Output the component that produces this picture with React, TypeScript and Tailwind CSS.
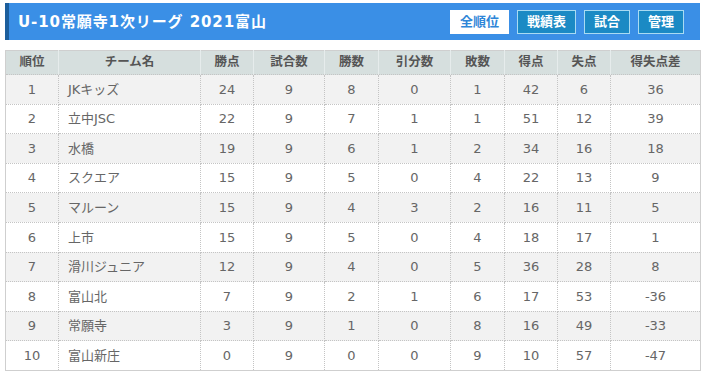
import React from 'react';

type Row = {
  rank: number;
  team: string;
  pts: number;
  played: number;
  win: number;
  draw: number;
  lose: number;
  gf: number;
  ga: number;
  gd: number;
};

const rows: Row[] = [
  { rank: 1, team: 'JKキッズ', pts: 24, played: 9, win: 8, draw: 0, lose: 1, gf: 42, ga: 6, gd: 36 },
  { rank: 2, team: '立中JSC', pts: 22, played: 9, win: 7, draw: 1, lose: 1, gf: 51, ga: 12, gd: 39 },
  { rank: 3, team: '水橋', pts: 19, played: 9, win: 6, draw: 1, lose: 2, gf: 34, ga: 16, gd: 18 },
  { rank: 4, team: 'スクエア', pts: 15, played: 9, win: 5, draw: 0, lose: 4, gf: 22, ga: 13, gd: 9 },
  { rank: 5, team: 'マルーン', pts: 15, played: 9, win: 4, draw: 3, lose: 2, gf: 16, ga: 11, gd: 5 },
  { rank: 6, team: '上市', pts: 15, played: 9, win: 5, draw: 0, lose: 4, gf: 18, ga: 17, gd: 1 },
  { rank: 7, team: '滑川ジュニア', pts: 12, played: 9, win: 4, draw: 0, lose: 5, gf: 36, ga: 28, gd: 8 },
  { rank: 8, team: '富山北', pts: 7, played: 9, win: 2, draw: 1, lose: 6, gf: 17, ga: 53, gd: -36 },
  { rank: 9, team: '常願寺', pts: 3, played: 9, win: 1, draw: 0, lose: 8, gf: 16, ga: 49, gd: -33 },
  { rank: 10, team: '富山新庄', pts: 0, played: 9, win: 0, draw: 0, lose: 9, gf: 10, ga: 57, gd: -47 },
];

const headers = [
  { label: '順位', w: 'w-[53px]' },
  { label: 'チーム名', w: 'w-[142px]' },
  { label: '勝点', w: 'w-[53px]' },
  { label: '試合数', w: 'w-[71px]' },
  { label: '勝数', w: 'w-[54px]' },
  { label: '引分数', w: 'w-[72px]' },
  { label: '敗数', w: 'w-[54px]' },
  { label: '得点', w: 'w-[53px]' },
  { label: '失点', w: 'w-[53px]' },
  { label: '得失点差', w: 'w-[90px]' },
];

const font = { fontFamily: '"DejaVu Sans", "Noto Sans CJK JP", sans-serif' };

const NavButton: React.FC<{ label: string; active?: boolean }> = ({ label, active }) => (
  <button
    className={
      active
        ? 'h-[24px] px-[9px] bg-white text-[#2f86d8] text-[13px] font-bold border border-white'
        : 'h-[24px] px-[9px] bg-[#1b8ac4] text-white text-[13px] font-bold border border-[#a9dbf2]'
    }
  >
    {label}
  </button>
);

export default function App() {
  return (
    <div className="w-[705px] h-[377px] bg-white pt-[3px] pl-[5px] pr-[5px]" style={font}>
      <div className="flex items-center justify-between h-[37px] bg-[#3a8fe6] border-l-[4px] border-[#1c5e9c] pl-[9px] pr-[16px]">
        <h1 className="pt-[2px] text-white text-[15px] font-bold tracking-[0.9px]">U-10常願寺1次リーグ 2021富山</h1>
        <div className="flex gap-2">
          <NavButton label="全順位" active />
          <NavButton label="戦績表" />
          <NavButton label="試合" />
          <NavButton label="管理" />
        </div>
      </div>

      <table className="mt-[10px] w-[695px] table-fixed border-collapse border border-[#cfcfcf] text-[13px] text-[#666]">
        <thead>
          <tr className="h-[24px] bg-[#d6dfde]">
            {headers.map((h) => (
              <th key={h.label} className={`${h.w} font-bold text-[12.5px] text-[#555] text-center border-r border-[#e6ecec] last:border-r-0`}>
                {h.label}
              </th>
            ))}
          </tr>
        </thead>
        <tbody>
          {rows.map((r, i) => (
            <tr key={r.rank} className={i % 2 === 0 ? 'h-[29.6px] bg-[#f2f2f2]' : 'h-[29.6px] bg-white'}>
              <td className="text-center border border-dotted border-[#c4c4c4]">{r.rank}</td>
              <td className="text-left pl-[9px] border border-dotted border-[#c4c4c4]">{r.team}</td>
              <td className="text-center border border-dotted border-[#c4c4c4]">{r.pts}</td>
              <td className="text-center border border-dotted border-[#c4c4c4]">{r.played}</td>
              <td className="text-center border border-dotted border-[#c4c4c4]">{r.win}</td>
              <td className="text-center border border-dotted border-[#c4c4c4]">{r.draw}</td>
              <td className="text-center border border-dotted border-[#c4c4c4]">{r.lose}</td>
              <td className="text-center border border-dotted border-[#c4c4c4]">{r.gf}</td>
              <td className="text-center border border-dotted border-[#c4c4c4]">{r.ga}</td>
              <td className="text-center border border-dotted border-[#c4c4c4]">{r.gd}</td>
            </tr>
          ))}
        </tbody>
      </table>
    </div>
  );
}
